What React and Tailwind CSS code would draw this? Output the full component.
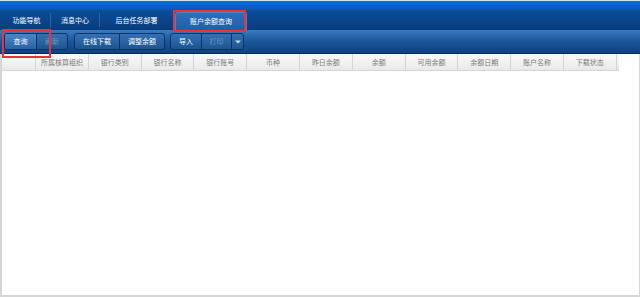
import React from "react";

const font = { fontFamily: '"Noto Sans CJK SC", "Noto Sans", sans-serif' };

function Seg({ children, w, disabled, first, last, pressed }) {
  return (
    <div
      className={`flex items-center justify-center h-full ${w} ${first ? "" : "border-l border-l-[#0a3466]"} ${pressed ? "bg-[linear-gradient(#4a86c6,#2a64a6)]" : ""} ${disabled ? "text-[#6f95c2]" : "text-white"}`}
    >
      {children}
    </div>
  );
}

export default function App() {
  const cols = ["所属核算组织", "银行类别", "银行名称", "银行账号", "币种", "昨日余额", "余额", "可用余额", "余额日期", "账户名称", "下载状态"];
  return (
    <div className="relative w-[640px] h-[297px] bg-white overflow-hidden flex flex-col" style={font}>
      {/* top bright band */}
      <div className="h-[10px] border-t border-t-[#cfe0f3] bg-[linear-gradient(#0d6fdc,#0658b8)]" />
      {/* tab bar */}
      <div className="h-[20px] flex items-stretch bg-[linear-gradient(#0b4d98,#083d7c)] text-white text-[7px] leading-none">
        <div className="w-[50px] flex items-center justify-center pl-[3px]">功能导航</div>
        <div className="w-px my-[3px] bg-[#2f64a6]" />
        <div className="w-[48px] flex items-center justify-center">消息中心</div>
        <div className="w-px my-[3px] bg-[#2f64a6]" />
        <div className="w-[73px] flex items-center justify-center">后台任务部署</div>
        <div className="ml-[2px] mt-[2px] w-[72px] flex items-center justify-center rounded-t-[3px] border border-b-0 border-[#4a82c4] bg-[linear-gradient(#2c6fbc,#1f5fab)]">账户余额查询</div>
      </div>
      {/* toolbar */}
      <div className="h-[24px] flex items-center pl-[4px] bg-[linear-gradient(#3a7bc0,#1a5598_50%,#0d4182)] border-b border-b-[#062a57] text-[7px] leading-none">
        <div className="h-[17px] flex rounded-[3px] border border-[#0a3466] bg-[linear-gradient(#3470b4,#1c558f)] overflow-hidden">
          <Seg w="w-[31px]" first pressed>查询</Seg>
          <Seg w="w-[31px]" disabled>刷新</Seg>
        </div>
        <div className="ml-[6px] h-[17px] flex rounded-[3px] border border-[#0a3466] bg-[linear-gradient(#3470b4,#1c558f)] overflow-hidden">
          <Seg w="w-[44px]" first>在线下载</Seg>
          <Seg w="w-[45px]">调整余额</Seg>
        </div>
        <div className="ml-[5px] h-[17px] flex rounded-[3px] border border-[#0a3466] bg-[linear-gradient(#3470b4,#1c558f)] overflow-hidden">
          <Seg w="w-[30px]" first>导入</Seg>
          <Seg w="w-[30px]" disabled>打印</Seg>
          <Seg w="w-[12px]">
            <svg width="6" height="4" viewBox="0 0 6 4"><path d="M0 0.5h6L3 3.5z" fill="#c9d9ee" /></svg>
          </Seg>
        </div>
      </div>
      {/* grid body */}
      <div className="flex-1 flex flex-col border-l-2 border-r border-b-2 border-[#d6d6d6]">
        <div className="h-[17px] flex w-[617px] bg-[linear-gradient(#fafafa,#e9e9e9)] border-b border-b-[#d4d4d4] text-[7px] text-[#7a7a7a] leading-none">
          <div className="w-[34px] border-r border-r-[#d4d4d4]" />
          {cols.map((c) => (
            <div key={c} className="w-[52.8px] shrink-0 flex items-center justify-center border-r border-r-[#d4d4d4]">{c}</div>
          ))}
        </div>
        <div className="flex-1 bg-white" />
      </div>
      {/* annotation boxes */}
      <div className="absolute left-[173px] top-[10px] w-[73px] h-[22px] border-2 border-[#e8333a]" />
      <div className="absolute left-[2px] top-[29px] w-[49px] h-[29px] border-2 border-[#e8333a]" />
    </div>
  );
}
